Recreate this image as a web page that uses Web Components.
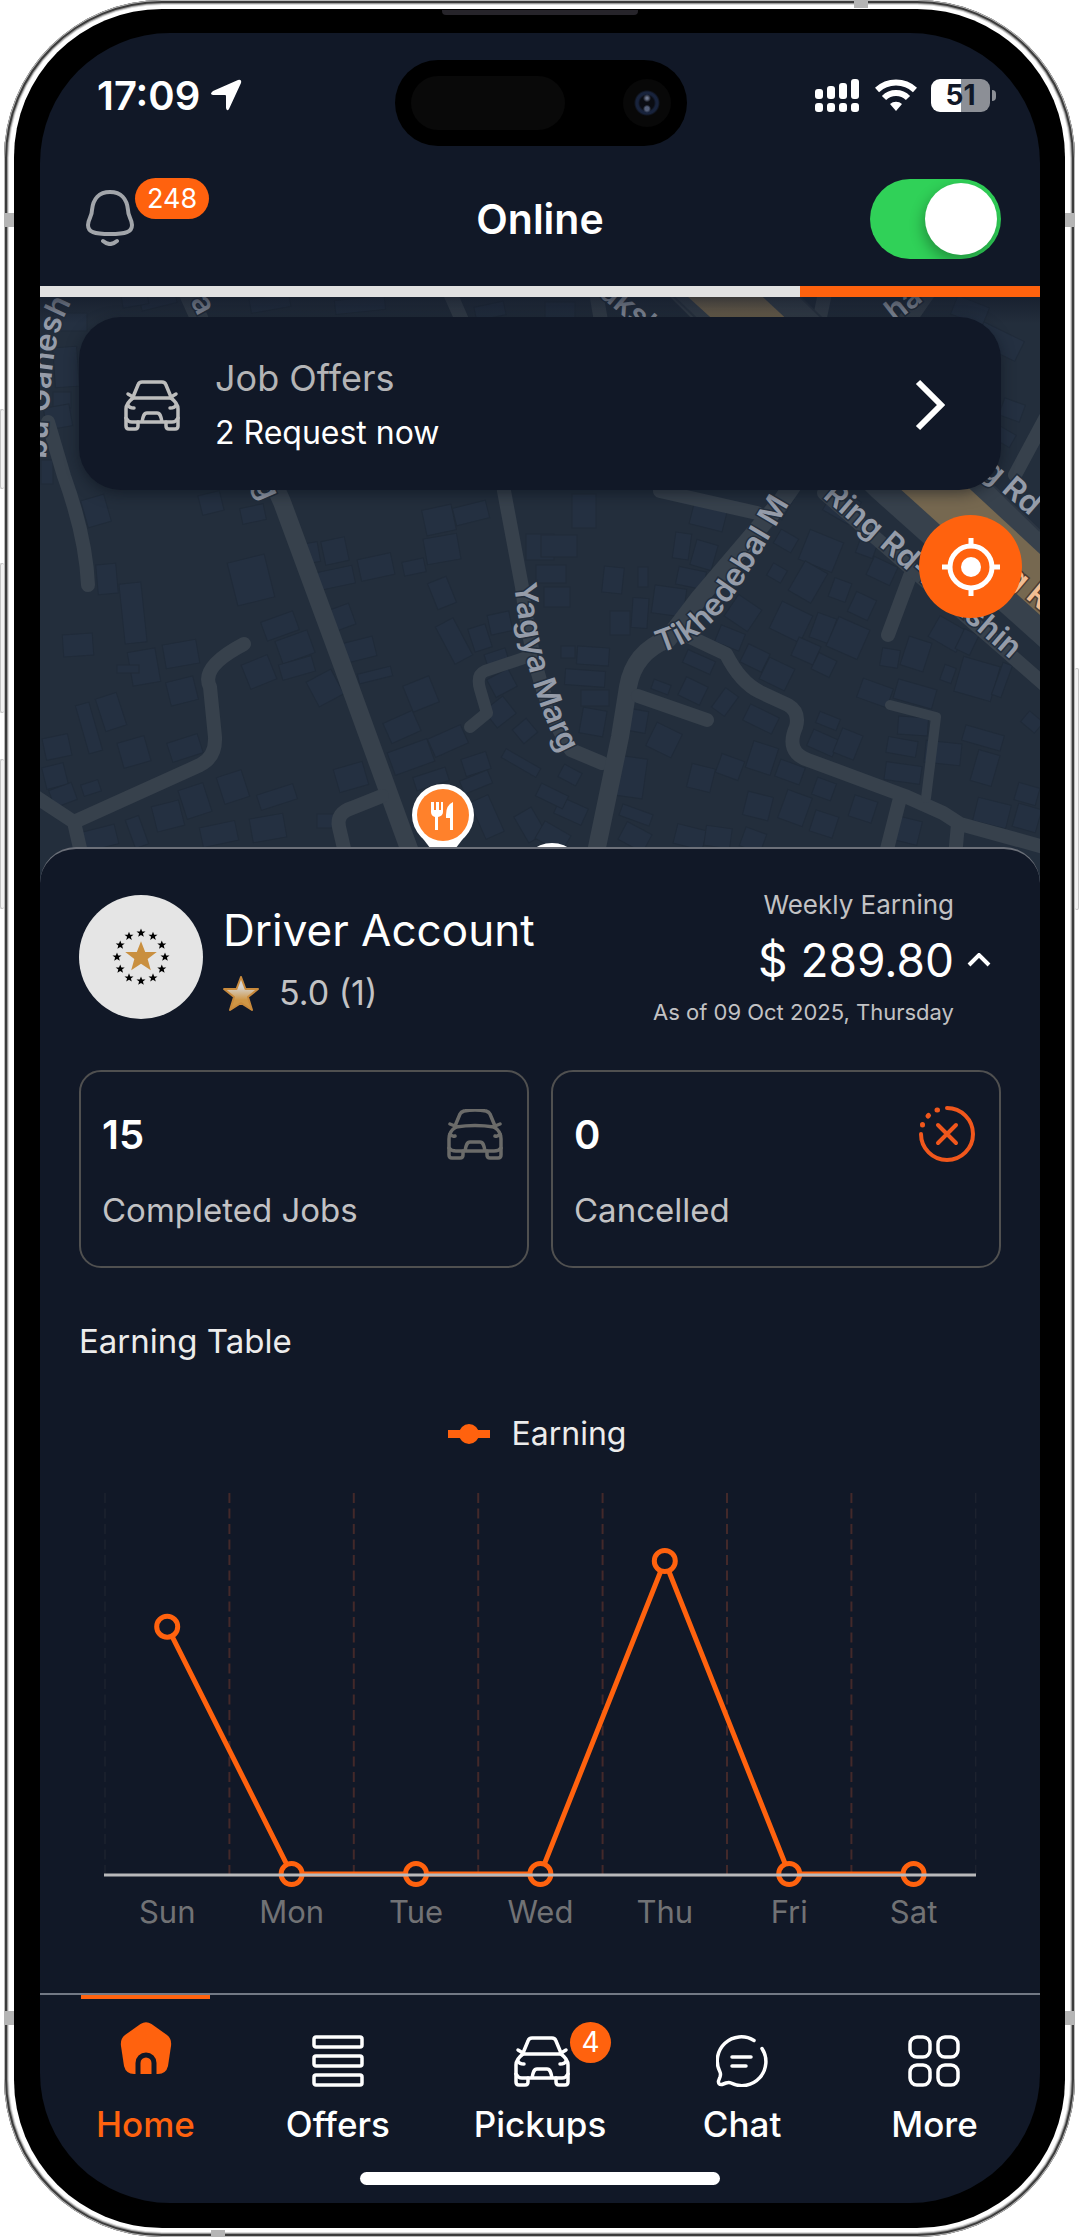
<!DOCTYPE html>
<html lang="en">
<head>
<meta charset="utf-8">
<meta name="viewport" content="width=device-width, initial-scale=1">
<title>Driver Home</title>
<style>
  body {
    margin: 0;
    background: #fff;
    font-family: Inter, "Liberation Sans", sans-serif;
    color: #fff;
    --bg: #111827;
    --accent: #ff620e;
    --muted: #c2c2c4;
  }
</style>
</head>
<body>
<phone-frame>
  <status-bar time="17:09" battery="51"></status-bar>
  <app-header heading="Online" notifications="248"></app-header>
  <shift-progress value="76"></shift-progress>
  <map-view>
    <job-card heading="Job Offers">2 Request now</job-card>
  </map-view>
  <driver-panel>
    <driver-profile name="Driver Account" rating="5.0 (1)" amount="$ 289.80" date="As of 09 Oct 2025, Thursday"></driver-profile>
    <stat-row>
      <stat-card value="15" icon="carRound">Completed Jobs</stat-card>
      <stat-card value="0" icon="cancel">Cancelled</stat-card>
    </stat-row>
    <earning-chart heading="Earning Table" series="Earning" values="128,0,0,0,162,0,0"></earning-chart>
  </driver-panel>
  <tab-bar>
    <tab-item icon="home" active>Home</tab-item>
    <tab-item icon="offers">Offers</tab-item>
    <tab-item icon="car" badge="4">Pickups</tab-item>
    <tab-item icon="chat">Chat</tab-item>
    <tab-item icon="more">More</tab-item>
  </tab-bar>
</phone-frame>

<script>
const ICONS = {
  bell: [48, 56, `<g fill="none" stroke="currentColor" stroke-width="4" stroke-linecap="round"><path d="M24 2C13 2 7 9 6 20C6 27 2 29 2 35C2 42 8 44 24 44C40 44 46 42 46 35C46 29 42 27 42 20C41 9 35 2 24 2Z"/><path d="M17 51Q24 57 31 51"/></g>`],
  car: [56, 51, `<g fill="none" stroke="currentColor" stroke-width="3.500" stroke-linecap="round" stroke-linejoin="round"><path d="M9 17L14 5Q15 2 18 2H38Q41 2 42 5L47 17M8 18H48M4 14L9 17M52 14L47 17"/><path d="M9 18C5 21 2 24 2 29V46Q2 49 5 49H11Q14 49 14 46V42M47 18C51 21 54 24 54 29V46Q54 49 51 49H45Q42 49 42 46V42"/><path d="M2 38Q4 42 8 42H48Q52 42 54 38M18 42C19 36 20 33 23 33H33C36 33 37 36 38 42M4 25Q5 28 10 28M52 25Q51 28 46 28"/></g>`],
  carRound: [56, 51, `<g fill="none" stroke="currentColor" stroke-width="3.500" stroke-linecap="round" stroke-linejoin="round"><path d="M8 17L13 5Q14 3 17 2Q28 0 39 2Q42 3 43 5L48 17M9 18Q28 15 47 18M3 15L8 17M53 15L48 17"/><path d="M9 18C4 21 2 24 2 30V46Q2 49 5 49H13Q16 49 16 46V42M47 18C52 21 54 24 54 30V46Q54 49 51 49H43Q40 49 40 46V42"/><path d="M2 39Q4 42 9 42H47Q52 42 54 39M18 42C19 36 20 33 23 33H33C36 33 37 36 38 42M3 25Q5 28 8 27M53 25Q51 28 48 27"/></g>`],
  cancel: [56, 56, `<g fill="none" stroke="currentColor" stroke-width="4" stroke-linecap="round"><path d="M28 2A26 26 0 1 1 2 28M19 19L37 37M37 19L19 37"/><path d="M18 4h.5M9 10l.5-.5M3.500 19v-.5" stroke-width="5"/></g>`],
  chevronRight: [30, 52, `<path d="M3 3L26 26L3 49" fill="none" stroke="currentColor" stroke-width="6"/>`],
  chevronUp: [24, 14, `<path d="M2 12L12 2L22 12" fill="none" stroke="currentColor" stroke-width="4"/>`],
  locate: [58, 58, `<g fill="none" stroke="currentColor" stroke-width="5"><circle cx="29" cy="29" r="21"/><path d="M29 0V8M29 50V58M0 29H8M50 29H58"/></g><circle cx="29" cy="29" r="10" fill="currentColor"/>`],
  home: [52, 52, `<path fill="currentColor" d="M20.500 2Q26-1.500 31.500 2L47 13Q52 17 51 24L48 44Q46 52 38 52H14Q6 52 4 44L1 24Q0 17 5 13Z"/><path d="M18 53V41a8 8 0 0 1 16 0V53" fill="none" stroke="#111827" stroke-width="5"/>`],
  offers: [52, 52, `<g fill="none" stroke="currentColor" stroke-width="3.500"><rect x="2" y="2" width="48" height="10" rx="2"/><rect x="2" y="21" width="48" height="10" rx="2"/><rect x="2" y="40" width="48" height="10" rx="2"/></g>`],
  chat: [52, 52, `<g fill="none" stroke="currentColor" stroke-width="3.500" stroke-linecap="round" stroke-linejoin="round"><path d="M38 5.500A24 24 0 0 0 4 37Q5 39 4 42L2.500 46Q2 50 6 49.500L10 48Q13 47 15 48A24 24 0 0 0 46 13.500M16 22H35M16 31H30"/></g>`],
  more: [52, 52, `<g fill="none" stroke="currentColor" stroke-width="3.500"><rect x="2" y="2" width="20" height="20" rx="7"/><rect x="30" y="2" width="20" height="20" rx="7"/><rect x="2" y="30" width="20" height="20" rx="7"/><rect x="30" y="30" width="20" height="20" rx="7"/></g>`],
  arrow: [32, 32, `<path d="M28 1Q32 0 31 4L19 30Q17 33 16 29V17Q16 16 15 16H3Q-1 15 3 12Z" fill="currentColor"/>`],
  signal: [46, 33, `<g fill="currentColor"><rect y="10" width="8" height="10" rx="3"/><rect x="12" y="7" width="8" height="13" rx="3"/><rect x="24" y="4" width="8" height="16" rx="3"/><rect x="36" width="8" height="20" rx="3"/><rect y="24" width="8" height="9" rx="3"/><rect x="12" y="24" width="8" height="9" rx="3"/><rect x="24" y="24" width="8" height="9" rx="3"/><rect x="36" y="24" width="8" height="9" rx="3"/></g>`],
  wifi: [42, 32, `<g fill="none" stroke="currentColor" stroke-width="6"><path d="M2 11A28 28 0 0 1 40 11M9 19A17 17 0 0 1 33 19"/></g><path d="M21 32L15 25A9 9 0 0 1 27 25Z" fill="currentColor"/>`],
  star: [36, 35, `<defs><linearGradient id="g" x2="0" y2="1"><stop offset=".3" stop-color="#d5d3d0"/><stop offset=".7" stop-color="#cf9645"/></linearGradient></defs><path d="M18 1L22.500 13H35L25 21L29 34L18 27L7 34L11 21L1 13H13.500Z" fill="url(#g)" stroke="#c98a3c" stroke-width="2" stroke-linejoin="round"/>`]
};

function icon(name) {
  const [w, h, body] = ICONS[name];
  return `<svg width="${w}" height="${h}" viewBox="0 0 ${w} ${h}" aria-hidden="true">${body}</svg>`;
}

class BaseElement extends HTMLElement {
  connectedCallback() {
    if (this.shadowRoot) return;
    const root = this.attachShadow({ mode: "open" });
    root.innerHTML = `<style>:host{display:block} *{box-sizing:border-box} svg{display:block;flex:none} button{font:inherit;color:inherit;background:none;border:0;padding:0;cursor:pointer}</style>` + this.render();
  }
  attr(name) {
    return this.getAttribute(name) || "";
  }
}

class PhoneFrame extends BaseElement {
  render() {
    return `
    <style>
      .case {
        position: relative;
        margin: 0 5px 0 4px;
        padding: 9px 10px;
        border-radius: 158px;
        background: #fff;
        box-shadow: inset 0 0 0 1px #b9b9b9, inset 0 0 0 3px #3c3c3c, inset 0 0 0 4px #9a9a9a, inset 0 0 0 5px #dcdcdc;
      }
      .bezel {
        padding: 24px 25px 25px 26px;
        border-radius: 148px;
        background: #000;
      }
      .screen {
        border-radius: 130px;
        overflow: hidden;
        background: var(--bg);
      }
      /* hardware buttons, antenna bands and speaker sit on the case edge */
      .key {
        position: absolute;
        width: 4px;
        border: 1px solid #c4c4c4;
        border-radius: 3px;
        background: #f2f2f2;
      }
      .left { left: -4px; border-right: 0; }
      .right { right: -4px; border-left: 0; }
      .band { position: absolute; background: #b5b5b5; }
      .speaker {
        position: absolute;
        top: 10px;
        left: calc(50% - 98px);
        width: 196px;
        height: 5px;
        border-radius: 0 0 4px 4px;
        background: #26242a;
      }
    </style>
    <div class="case">
      <div class="bezel"><div class="screen"><slot></slot></div></div>
      <i class="speaker"></i>
      <i class="key left" style="top:409px;height:80px"></i>
      <i class="key left" style="top:563px;height:150px"></i>
      <i class="key left" style="top:759px;height:150px"></i>
      <i class="key right" style="top:668px;height:242px"></i>
      <i class="band" style="left:0;top:213px;width:10px;height:14px"></i>
      <i class="band" style="right:0;top:213px;width:10px;height:14px"></i>
      <i class="band" style="left:0;bottom:212px;width:10px;height:14px"></i>
      <i class="band" style="right:0;bottom:212px;width:10px;height:14px"></i>
      <i class="band" style="right:207px;top:0;width:14px;height:8px"></i>
      <i class="band" style="left:207px;bottom:0;width:14px;height:7px"></i>
    </div>`;
  }
}
customElements.define("phone-frame", PhoneFrame);

class StatusBar extends BaseElement {
  render() {
    return `
    <style>
      :host {
        display: grid;
        grid-template-columns: 1fr 292px 1fr;
        padding: 27px 44px 0 57px;
      }
      .side {
        display: flex;
        align-items: center;
        gap: 10px;
        height: 70px;
        font-size: 40px;
        font-weight: 600;
      }
      .end { justify-content: flex-end; gap: 14px; }
      .island {
        display: flex;
        align-items: center;
        justify-content: space-between;
        height: 86px;
        margin-left: -6px;
        margin-right: 6px;
        padding: 0 16px;
        border-radius: 43px;
        background: #000;
      }
      .sensor { width: 154px; height: 54px; border-radius: 27px; background: #090909; }
      .camera {
        width: 48px;
        height: 48px;
        border-radius: 50%;
        background:
          radial-gradient(circle at 50% 40%, #6f7890 0 1px, transparent 4px),
          radial-gradient(circle at 50% 62%, #55607a 0 2px, transparent 4px),
          radial-gradient(circle, #0a0c12 0 7px, #18233c 9px 11px, #080808 13px);
      }
      .battery { display: flex; align-items: center; gap: 2px; }
      .level {
        width: 59px;
        height: 33px;
        border-radius: 9px;
        background: linear-gradient(90deg, #fff ${this.attr("battery")}%, #8c8f96 0);
        color: #111827;
        font-size: 28px;
        line-height: 33px;
        font-weight: 700;
        text-align: center;
      }
      .nub { width: 4px; height: 11px; border-radius: 0 5px 5px 0; background: #8c8f96; }
    </style>
    <div class="side"><time>${this.attr("time")}</time>${icon("arrow")}</div>
    <div class="island"><i class="sensor"></i><i class="camera"></i></div>
    <div class="side end">${icon("signal")}${icon("wifi")}<div class="battery"><div class="level">${this.attr("battery")}</div><i class="nub"></i></div></div>`;
  }
}
customElements.define("status-bar", StatusBar);

class AppHeader extends BaseElement {
  render() {
    return `
    <style>
      :host {
        display: grid;
        grid-template-columns: 1fr auto 1fr;
        align-items: center;
        padding: 32px 39px 27px;
      }
      .bell {
        display: flex;
        align-items: flex-end;
        justify-self: start;
        height: 81px;
        padding: 0 0 13px 7px;
        color: #a2a5aa;
      }
      .count {
        align-self: flex-start;
        margin-left: 1px;
        padding: 0 12px;
        border-radius: 21px;
        background: var(--accent);
        color: #fff;
        font-size: 27px;
        line-height: 41px;
      }
      h1 { margin: 0; font-size: 41px; line-height: 48px; font-weight: 600; }
      input {
        justify-self: end;
        appearance: none;
        display: flex;
        justify-content: flex-end;
        align-items: center;
        width: 131px;
        height: 80px;
        margin: 0;
        padding: 4px;
        border-radius: 40px;
        background: #30d158;
        cursor: pointer;
        overflow: hidden;
      }
      input::before {
        content: "";
        width: 72px;
        height: 72px;
        border-radius: 50%;
        background: #fff;
        box-shadow: -2px 6px 14px rgba(0, 0, 0, .3);
      }
      input:not(:checked) { background: #39404f; justify-content: flex-start; }
    </style>
    <button class="bell" aria-label="Notifications">${icon("bell")}<span class="count">${this.attr("notifications")}</span></button>
    <h1 id="state">${this.attr("heading")}</h1>
    <input type="checkbox" role="switch" aria-labelledby="state" checked>`;
  }
}
customElements.define("app-header", AppHeader);

class ShiftProgress extends BaseElement {
  render() {
    return `
    <style>
      :host { position: relative; height: 11px; background: linear-gradient(90deg, #e1e1e1 ${this.attr("value")}%, var(--accent) 0); }
    </style>`;
  }
}
customElements.define("shift-progress", ShiftProgress);

// x, y of the centre, width, height, rotation
const BUILDINGS = [
  [56,214,24,28,-16],[67,282,20,30,-5],[93,316,22,60,-6],[38,348,30,22,-4],[104,370,28,34,-10],[141,357,34,24,-10],
  [211,283,38,44,-14],[213,217,24,16,-12],[171,206,22,20,-14],[270,256,18,20,-10],[295,254,24,24,-12],[295,281,38,18,-12],
  [336,270,34,22,-12],[374,270,22,14,-12],[399,223,30,26,-12],[431,216,34,18,-14],[402,252,34,26,-10],[402,296,20,28,-22],
  [240,329,34,20,-20],[255,350,34,24,-20],[257,371,34,16,-16],[219,375,28,26,-22],[142,394,28,24,-14],[88,372,22,8,0],
  [71,415,22,34,-18],[49,431,14,50,-16],[17,450,26,22,-12],[94,455,28,26,-16],[145,451,32,20,-18],[15,479,22,22,-14],
  [23,498,24,18,-20],[51,491,18,12,-18],[128,519,28,26,-14],[155,504,26,30,-18],[193,490,26,28,-18],[237,500,38,16,-18],
  [228,531,34,24,-10],[179,537,36,20,-12],[60,541,34,20,-14],[97,535,14,30,-20],[300,321,26,22,-20],[318,353,34,20,-14],
  [285,391,28,28,-28],[335,378,34,10,-14],[381,397,28,28,-22],[362,430,32,22,-24],[371,460,42,24,-20],[408,444,36,20,-24],
  [311,480,30,24,-16],[391,482,34,14,-18],[436,467,26,18,-18],[436,485,30,14,-22],[287,524,20,14,0],[414,344,20,42,-28],
  [440,341,18,24,-18],[460,326,22,20,-12],[457,362,22,16,-18],[462,386,24,20,-28],[460,415,24,22,-38],[485,434,18,18,-40],
  [481,466,40,10,30],[447,520,20,40,-24],[490,528,20,30,-30],[500,250,28,26,0],[519,249,36,22,0],[511,277,30,18,0],
  [517,300,26,20,0],[544,214,24,34,0],[573,283,20,26,6],[603,280,10,20,0],[629,304,32,28,8],[600,316,16,30,4],
  [580,326,20,24,0],[528,355,14,12,0],[553,359,32,18,4],[545,381,40,16,4],[555,401,28,16,0],[553,425,24,26,10],
  [530,478,20,14,28],[668,221,34,20,14],[642,249,16,26,8],[664,258,22,26,16],[651,281,28,18,12],[740,208,18,24,30],
  [781,254,36,32,22],[746,244,20,16,30],[802,209,30,26,30],[827,250,18,18,20],[768,285,26,34,30],[737,276,16,14,30],
  [800,293,18,20,20],[822,309,22,22,25],[842,274,26,20,25],[703,316,28,26,34],[751,325,34,30,26],[783,331,20,26,20],
  [808,341,34,32,24],[690,341,26,18,22],[715,361,24,20,26],[766,354,24,20,24],[784,368,20,18,26],[737,377,28,24,26],
  [659,365,30,14,24],[653,394,24,20,26],[621,390,18,10,20],[685,405,16,24,36],[721,422,32,18,26],[598,424,18,22,10],
  [624,443,28,26,26],[690,470,24,20,20],[661,481,24,24,14],[590,480,30,40,8],[722,461,26,28,18],[750,475,26,18,20],
  [788,424,22,12,22],[783,446,28,18,24],[808,447,22,26,22],[835,396,32,20,20],[875,397,40,20,16],[850,361,18,18,10],
  [876,357,24,30,18],[908,377,12,16,20],[937,382,38,36,16],[962,383,10,34,20],[908,337,32,24,30],[927,345,16,22,26],
  [873,429,30,18,4],[862,450,30,16,10],[863,476,36,18,8],[903,456,36,22,6],[943,441,40,16,16],[945,471,22,32,16],
  [992,425,18,14,40],[952,516,34,24,14],[987,497,22,18,16],[987,521,24,24,16],[718,509,26,24,14],[755,511,26,30,20],
  [784,492,20,18,20],[784,527,24,22,18],[823,512,24,22,18],[865,533,30,24,14],[531,514,30,18,24],[513,540,30,20,30],
  [596,518,32,12,20],[595,540,28,20,28],[650,540,30,20,14],[678,540,26,20,8],[713,543,22,20,20],[512,499,30,14,26],
  [30,25,34,18,0],[26,70,24,40,-4],[22,103,18,16,0],[18,120,26,22,-10],[118,3,36,14,-14],[95,3,26,12,-10],
  [230,6,40,14,-10],[320,8,50,14,-6],[450,14,30,14,-12],[520,14,30,18,0],[958,44,48,22,26],[930,14,34,20,22],
  [972,113,22,18,20],[965,140,18,14,30],[7,175,12,24,0]
];

class MapView extends BaseElement {
  render() {
    const blocks = BUILDINGS.map(([x, y, w, h, r]) =>
      `<rect x="${x - w / 2}" y="${y - h / 2}" width="${w}" height="${h}" transform="rotate(${r} ${x} ${y})"/>`).join("");
    return `
    <style>
      :host { display: grid; grid-template-columns: minmax(0, 1fr); background: #232e3c; }
      .map, .over { grid-area: 1 / 1; }
      .map { width: 100%; height: auto; }
      .over { display: flex; flex-direction: column; padding: 20px 39px; }
      .locate {
        display: grid;
        place-items: center;
        align-self: flex-end;
        width: 103px;
        height: 103px;
        margin: 25px -21px 0 0;
        border-radius: 50%;
        background: var(--accent);
      }
      text { font-size: 31px; font-weight: 600; fill: #959ca9; paint-order: stroke; stroke: #232e3c; stroke-width: 3px; }
    </style>
    <svg class="map" viewBox="0 0 1000 590" role="img" aria-label="Map">
      <defs>
        <linearGradient id="shade" x2="0" y2="1"><stop stop-color="#111827" stop-opacity=".6"/><stop offset="1" stop-color="#111827" stop-opacity="0"/></linearGradient>
        <path id="ganesh" d="M6 162C9 120 10 80 16 48Q22 15 44-14"/>
        <path id="yagya" d="M474 287C480 340 490 405 536 484"/>
        <path id="tikh" d="M620 356C670 342 690 305 718 260L795 130"/>
        <path id="ring" d="M782 200L1000 388"/>
      </defs>
      <g fill="#243041" stroke="#202b39">${blocks}</g>
      <g fill="none" stroke="#37414c" stroke-width="14" stroke-linecap="round" stroke-linejoin="round">
        <path d="M8 125L24 179Q46 240 48 288"/>
        <path d="M145-10L242 205L300 362L372 560" stroke-width="18"/>
        <path d="M408-8Q455 90 464 194L482 290Q495 400 531 453L562 466"/>
        <path d="M204 347Q160 370 170 390L175 440Q176 460 160 468L34 525L-4 500M34 525L42 560"/>
        <path d="M487 360L445 374Q436 378 440 392L447 416L430 430" stroke-width="12"/>
        <path d="M342 499L312 511Q296 516 299 530L306 560"/>
        <path d="M555 560L580 440L588 390Q594 355 628 342L660 300L741 205L890-10" stroke-width="18"/>
        <path d="M650 340L686 357Q700 385 720 395L748 408Q760 415 756 430Q745 455 768 463L865 499L903 516L920 527L1004 550M918 527L915 560M860 501L845 560"/>
        <path d="M886 501L896 420L850 408" stroke-width="10"/>
        <path d="M598 399L667 423M870 279L848 338"/>
        <path d="M620 194L717 216M1005 122L975 178M556-5L562 30M785-4L780 20"/>
        <path d="M784 196L1005 388"/>
      </g>
      <path d="M620-10L750-10L1000 234V350L832 200Z" fill="#37414c"/>
      <path d="M637-10L712-10L1000 257V318L858 190Z" fill="#766850"/>
      <path d="M750-10L1000 234M632-2L832 190" stroke="#2c3643" stroke-width="2"/>
      <g aria-hidden="true">
        <text><textPath href="#ganesh">bu Ganesh</textPath></text>
        <text transform="translate(150 4) rotate(62)">a</text>
        <text transform="translate(214 187) rotate(66)">g</text>
        <text><textPath href="#yagya">Yagya Marg</textPath></text>
        <text><textPath href="#tikh">Tikhedebal M</textPath></text>
        <text><textPath href="#ring">Ring Rd-Dakshin</textPath></text>
        <text transform="translate(558 -2) rotate(40)">aksh</text>
        <text transform="translate(940 176) rotate(41)">g Rd</text>
        <text transform="translate(855 26) rotate(-38)">ha</text>
        <text transform="translate(964 283) rotate(40)" style="fill:#f0bd93;stroke:#4a3b30">g R</text>
      </g>
      <rect width="1000" height="26" fill="url(#shade)"/>
      <g>
        <path d="M377 534L394 556H412L429 534Z" fill="#fff"/>
        <circle cx="403" cy="518" r="31" fill="#fff"/>
        <circle cx="403" cy="518" r="26" fill="#ff812b"/>
        <path d="M391 505V515Q391 519 395 520V533H398V520Q403 519 403 515V505H401V513H399V505H396V513H394V505ZM413 505Q406 508 406 518V521H410V533H413Z" fill="#fff"/>
        <circle cx="512" cy="577" r="31" fill="#fff"/>
      </g>
    </svg>
    <div class="over">
      <slot></slot>
      <button class="locate" aria-label="My location">${icon("locate")}</button>
    </div>`;
  }
}
customElements.define("map-view", MapView);

class JobCard extends BaseElement {
  render() {
    return `
    <style>
      button {
        display: flex;
        align-items: center;
        gap: 35px;
        width: 100%;
        padding: 37px 56px 34px 45px;
        border-radius: 42px;
        background: var(--bg);
        box-shadow: 0 4px 14px rgba(10, 15, 25, .5);
        text-align: left;
      }
      .car { color: #bdbdbd; }
      .text { flex: 1; }
      .heading { display: block; color: #b4b4b6; font-size: 36px; line-height: 48px; }
      .note { display: block; padding-top: 8px; font-size: 32px; line-height: 46px; }
    </style>
    <button>
      <span class="car">${icon("car")}</span>
      <span class="text"><span class="heading">${this.attr("heading")}</span><span class="note"><slot></slot></span></span>
      ${icon("chevronRight")}
    </button>`;
  }
}
customElements.define("job-card", JobCard);

class DriverPanel extends BaseElement {
  render() {
    return `
    <style>
      :host {
        position: relative;
        margin-top: -40px;
        padding: 38px 39px 50px;
        border-top: 2px solid #6c7079;
        border-radius: 36px 36px 0 0;
        background: var(--bg);
      }
    </style>
    <slot></slot>`;
  }
}
customElements.define("driver-panel", DriverPanel);

class DriverProfile extends BaseElement {
  render() {
    const star = "M0-4.500L1.200-1.400H4.500L1.900.6L2.800 3.800L0 1.900L-2.800 3.800L-1.900.6L-4.500-1.400H-1.200Z";
    let ring = "";
    for (let i = 0; i < 12; i++) {
      const a = i * Math.PI / 6;
      ring += `<path d="${star}" transform="translate(${62 + 24 * Math.sin(a)} ${62 - 24 * Math.cos(a)})"/>`;
    }
    return `
    <style>
      :host { display: flex; align-items: center; gap: 20px; }
      .who { flex: 1; display: flex; flex-direction: column; gap: 14px; }
      h2 { margin: 0; font-size: 44px; line-height: 58px; font-weight: 400; }
      .rating { display: flex; align-items: center; gap: 20px; color: var(--muted); font-size: 34px; line-height: 40px; }
      .earn {
        display: grid;
        grid-template-columns: auto 24px;
        column-gap: 13px;
        row-gap: 8px;
        align-items: center;
        justify-items: end;
        padding-right: 10px;
        color: var(--muted);
      }
      .earn > span { grid-column: 1; }
      .label { font-size: 26px; line-height: 36px; }
      .amount { color: #fff; font-size: 46px; line-height: 58px; }
      .date { font-size: 22px; line-height: 30px; }
      button { color: #fff; }
    </style>
    <svg width="124" height="124" viewBox="0 0 124 124" role="img" aria-label="Profile picture">
      <circle cx="62" cy="62" r="62" fill="#e5e5e5"/>
      <path d="${star}" transform="translate(62 62) scale(3.500)" fill="#c98f3f"/>
      ${ring}
    </svg>
    <div class="who">
      <h2>${this.attr("name")}</h2>
      <div class="rating">${icon("star")}<span>${this.attr("rating")}</span></div>
    </div>
    <div class="earn">
      <span class="label">Weekly Earning</span>
      <span class="amount">${this.attr("amount")}</span>
      <button aria-label="Hide earnings">${icon("chevronUp")}</button>
      <span class="date">${this.attr("date")}</span>
    </div>`;
  }
}
customElements.define("driver-profile", DriverProfile);

class StatRow extends BaseElement {
  render() {
    return `
    <style>
      :host { display: grid; grid-template-columns: 1fr 1fr; gap: 22px; margin-top: 43px; }
    </style>
    <slot></slot>`;
  }
}
customElements.define("stat-row", StatRow);

class StatCard extends BaseElement {
  render() {
    const name = this.attr("icon");
    return `
    <style>
      :host {
        padding: 34px 24px 34px 21px;
        border: 2px solid #505050;
        border-radius: 22px;
      }
      .top { display: flex; align-items: center; justify-content: space-between; height: 56px; }
      .top strong { font-size: 40px; font-weight: 600; }
      svg { color: ${name === "cancel" ? "#f1571c" : "#6b6b69"}; }
      .label { padding-top: 26px; color: var(--muted); font-size: 33px; line-height: 44px; }
    </style>
    <div class="top"><strong>${this.attr("value")}</strong>${icon(name)}</div>
    <div class="label"><slot></slot></div>`;
  }
}
customElements.define("stat-card", StatCard);

class EarningChart extends BaseElement {
  render() {
    const days = ["Sun", "Mon", "Tue", "Wed", "Thu", "Fri", "Sat"];
    const values = this.attr("values").split(",").map(Number);
    const left = 26, step = 124.4, base = 381, unit = 313 / 162;
    const points = values.map((v, i) => [left + step * (i + .5), base - v * unit]);
    const grid = Array.from({ length: 8 }, (_, i) => {
      const x = left + step * i;
      const edge = i === 0 || i === 7;
      return `<line x1="${x}" x2="${x}" y1="0" y2="${base}" stroke="${edge ? "#232733" : "#43292a"}" stroke-width="${edge ? 1 : 2}"/>`;
    }).join("");
    return `
    <style>
      :host { padding-top: 53px; }
      h3 { margin: 0; font-size: 33px; line-height: 40px; font-weight: 400; color: #ececec; }
      .legend {
        display: flex;
        align-items: center;
        justify-content: center;
        gap: 22px;
        margin: 53px 6px 39px 0;
        font-size: 32px;
        line-height: 40px;
        color: #ececec;
      }
      .chart { width: 100%; height: auto; }
      text { font-size: 31px; fill: #717275; text-anchor: middle; }
    </style>
    <h3>${this.attr("heading")}</h3>
    <div class="legend">
      <svg width="42" height="20" viewBox="0 0 42 20" fill="#ff620e"><rect y="6" width="42" height="8"/><circle cx="21" cy="10" r="10"/></svg>
      ${this.attr("series")}
    </div>
    <svg class="chart" viewBox="0 0 922 450" role="img" aria-label="Earnings per day">
      <g stroke-dasharray="10 5.500">${grid}</g>
      <polyline points="${points.map(p => p.join()).join(" ")}" fill="none" stroke="#ff620e" stroke-width="5"/>
      ${points.map(([x, y]) => `<circle cx="${x}" cy="${y}" r="10.500" fill="#111827" stroke="#ff620e" stroke-width="5"/>`).join("")}
      <path d="M25 382H897" stroke="#b9b9bb" stroke-width="3"/>
      ${days.map((d, i) => `<text x="${points[i][0]}" y="430">${d}</text>`).join("")}
    </svg>`;
  }
}
customElements.define("earning-chart", EarningChart);

class TabBar extends BaseElement {
  render() {
    return `
    <style>
      :host { border-top: 2px solid #737985; }
      nav { display: flex; justify-content: space-between; padding: 0 41px; }
      .grip { width: 36%; height: 13px; margin: 28px auto 18px; border-radius: 7px; background: #fff; }
    </style>
    <nav><slot></slot></nav>
    <div class="grip"></div>`;
  }
}
customElements.define("tab-bar", TabBar);

class TabItem extends BaseElement {
  render() {
    const badge = this.attr("badge");
    return `
    <style>
      :host { min-width: 129px; }
      a {
        display: flex;
        flex-direction: column;
        align-items: center;
        border-top: 4px solid transparent;
        padding: 36px 8px 0;
        color: #fff;
        font-size: 35px;
        line-height: 40px;
        font-weight: 500;
        text-decoration: none;
      }
      .icon { position: relative; display: grid; place-items: center; width: 52px; height: 52px; margin-bottom: 17px; }
      .badge {
        position: absolute;
        left: 56px;
        top: -13px;
        width: 41px;
        height: 41px;
        border-radius: 50%;
        background: var(--accent);
        font-size: 28px;
        line-height: 41px;
        font-weight: 400;
        text-align: center;
      }
      :host([active]) a { color: var(--accent); border-top-color: var(--accent); border-radius: 0 0 4px 4px; }
      :host([active]) .icon { margin: -13px 0 30px; }
    </style>
    <a href="#"${this.hasAttribute("active") ? ' aria-current="page"' : ""}>
      <span class="icon">${icon(this.attr("icon"))}${badge ? `<span class="badge">${badge}</span>` : ""}</span>
      <slot></slot>
    </a>`;
  }
}
customElements.define("tab-item", TabItem);
</script>
</body>
</html>
